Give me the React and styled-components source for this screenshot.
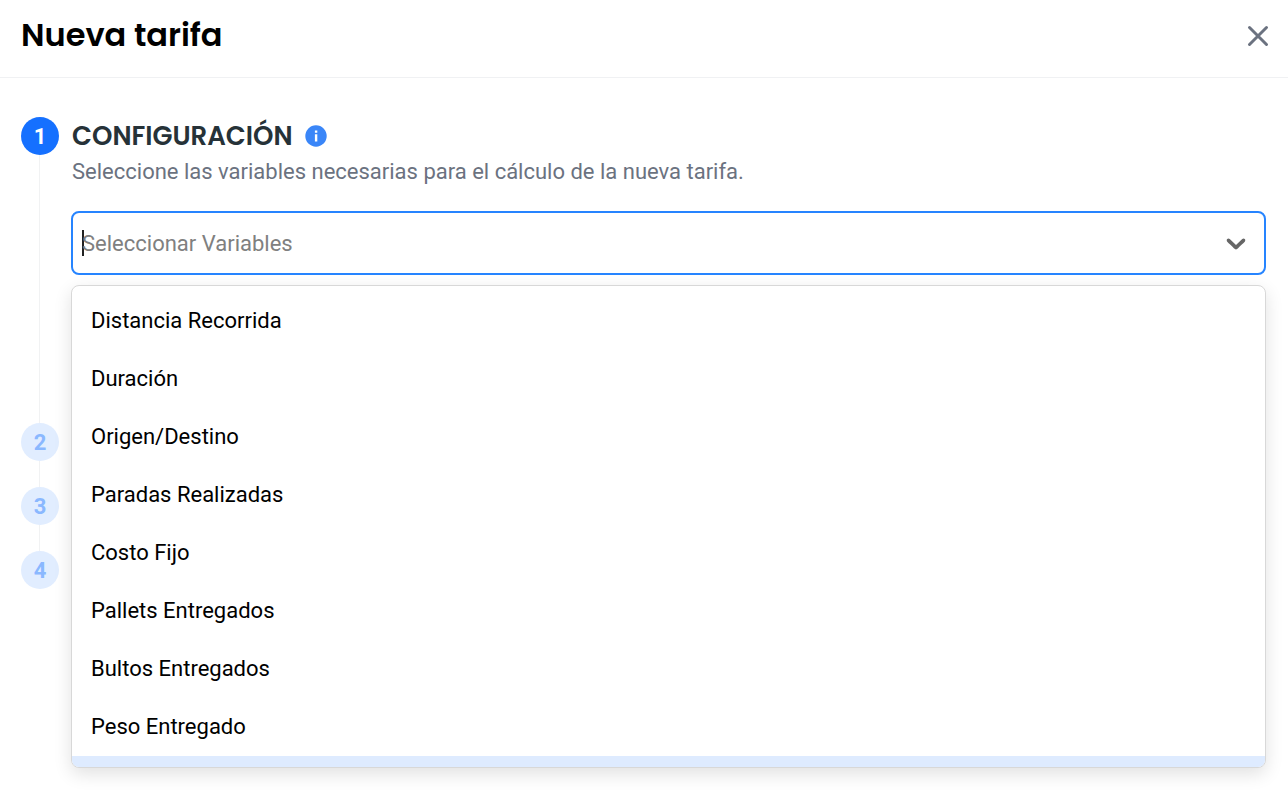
import React from 'react'
import styled, { createGlobalStyle } from 'styled-components'

const GlobalStyle = createGlobalStyle`
    * {
        box-sizing: border-box;
    }
    body {
        margin: 0;
        background-color: white;
        font-family: Roboto, sans-serif;
        font-size: 22px;
    }
`
const Page = styled.div`
    min-height: 100vh;
`
const Header = styled.header`
    display: flex;
    align-items: center;
    justify-content: space-between;
    height: 78px;
    padding: 0 18px 7px 21px;
    border-bottom: 1px solid #f0f1f3;
`
const Title = styled.h1`
    margin: 0;
    font-family: Poppins, Inter, sans-serif;
    font-size: 32px;
    font-weight: 600;
    line-height: 40px;
    color: black;
`
const CloseButton = styled.button`
    display: flex;
    padding: 2px 0 0;
    border: none;
    background: none;
    color: #6b7280;
`
const Steps = styled.ol`
    margin: 0;
    padding: 39px 22px 0 21px;
    list-style: none;
`
const Step = styled.li`
    display: flex;
    gap: 12px;
    min-height: ${props => props.$tall ? '306px' : '64px'};
`
const Rail = styled.div`
    display: flex;
    flex-direction: column;
    align-items: center;
    flex: none;
    width: 38px;
`
const Circle = styled.span`
    display: flex;
    align-items: center;
    justify-content: center;
    width: 38px;
    height: 38px;
    border-radius: 50%;
    font-size: 22px;
    font-weight: 700;
    background-color: ${props => props.$active ? '#1570ff' : '#e1edff'};
    color: ${props => props.$active ? 'white' : '#8ab8ff'};
`
const Line = styled.span`
    flex: 1;
    width: 2px;
    border-left: 1px solid #f1f2f3;
`
const Content = styled.div`
    flex: 1;
    min-width: 0;
`
const Row = styled.div`
    display: flex;
    align-items: center;
    gap: 12px;
    height: 38px;
    padding-left: 1px;
`
const StepTitle = styled.h2`
    margin: 0;
    font-family: Poppins, Inter, sans-serif;
    font-size: 26px;
    font-weight: 600;
    color: #263238;
`
const Description = styled.label`
    display: block;
    padding-left: 1px;
    line-height: 34px;
    color: #6b7280;
`
const Select = styled.div`
    position: relative;
    margin-top: 22px;
`
const Control = styled.div`
    display: flex;
    align-items: center;
    height: 64px;
    padding: 0 12px 0 9px;
    border: 2px solid #2684ff;
    border-radius: 8px;
`
const Caret = styled.span`
    flex: none;
    width: 2px;
    height: 26px;
    margin-right: -2px;
    background-color: #222;
`
const Input = styled.input`
    flex: 1;
    min-width: 0;
    padding: 0;
    border: none;
    outline: none;
    background: none;
    font-family: inherit;
    font-size: 22px;
    &::placeholder {
        color: #808080;
        opacity: 1;
    }
`
const Menu = styled.ul`
    position: absolute;
    top: 100%;
    left: 0;
    right: 0;
    max-height: 483px;
    margin: 10px 0 0;
    padding: 6px 0 0;
    overflow: hidden;
    list-style: none;
    background-color: white;
    border: 1px solid #d8d8d8;
    border-radius: 8px;
    box-shadow: 0 6px 18px rgba(0, 0, 0, 0.12);
`
const Option = styled.li`
    height: 58px;
    padding: 0 19px;
    line-height: 58px;
    color: black;
    background-color: ${props => props.$focused ? '#deebff' : 'white'};
`

const variables = [
    'Distancia Recorrida',
    'Duración',
    'Origen/Destino',
    'Paradas Realizadas',
    'Costo Fijo',
    'Pallets Entregados',
    'Bultos Entregados',
    'Peso Entregado',
]

const CloseIcon = () => (
    <svg width="24" height="24" viewBox="0 0 24 24" fill="none" stroke="currentColor" strokeWidth="3" strokeLinecap="round">
        <path d="M3.500 3.500 20.500 20.500M20.500 3.500 3.500 20.500"/>
    </svg>
)

const InfoIcon = () => (
    <svg width="22" height="22" viewBox="0 0 22 22">
        <circle cx="11" cy="11" r="10.7" fill="#3a86f8"/>
        <path fill="white" d="M9.900 5.500h2.400v2.200H9.900zM9.900 9.200h2.400v7.300H9.900z"/>
    </svg>
)

const ChevronIcon = () => (
    <svg width="32" height="32" viewBox="0 0 20 20" fill="#666">
        <path d="M4.516 7.548c0.436-0.446 1.043-0.481 1.576 0l3.908 3.747 3.908-3.747c0.533-0.481 1.141-0.446 1.574 0 0.436 0.445 0.408 1.197 0 1.615-0.406 0.418-4.695 4.502-4.695 4.502-0.217 0.223-0.502 0.335-0.787 0.335s-0.57-0.112-0.789-0.335c0 0-4.287-4.084-4.695-4.502s-0.436-1.170 0-1.615z"/>
    </svg>
)

const VariableSelect = () => (
    <Select>
        <Control>
            <Caret/>
            <Input id="variables" role="combobox" aria-expanded="true" aria-controls="options" placeholder="Seleccionar Variables"/>
            <ChevronIcon/>
        </Control>
        <Menu id="options" role="listbox">
            {variables.map(name => <Option key={name} role="option">{name}</Option>)}
            <Option $focused aria-hidden="true"/>
        </Menu>
    </Select>
)

const App = () => {
    return (
        <Page>
            <GlobalStyle/>
            <Header>
                <Title>Nueva tarifa</Title>
                <CloseButton aria-label="Cerrar"><CloseIcon/></CloseButton>
            </Header>
            <Steps>
                <Step $tall>
                    <Rail>
                        <Circle $active>1</Circle>
                        <Line/>
                    </Rail>
                    <Content>
                        <Row>
                            <StepTitle>CONFIGURACIÓN</StepTitle>
                            <InfoIcon/>
                        </Row>
                        <Description htmlFor="variables">
                            Seleccione las variables necesarias para el cálculo de la nueva tarifa.
                        </Description>
                        <VariableSelect/>
                    </Content>
                </Step>
                {[2, 3, 4].map(n => (
                    <Step key={n}>
                        <Rail>
                            <Circle>{n}</Circle>
                            {n < 4 && <Line/>}
                        </Rail>
                    </Step>
                ))}
            </Steps>
        </Page>
    )
}

export default App
